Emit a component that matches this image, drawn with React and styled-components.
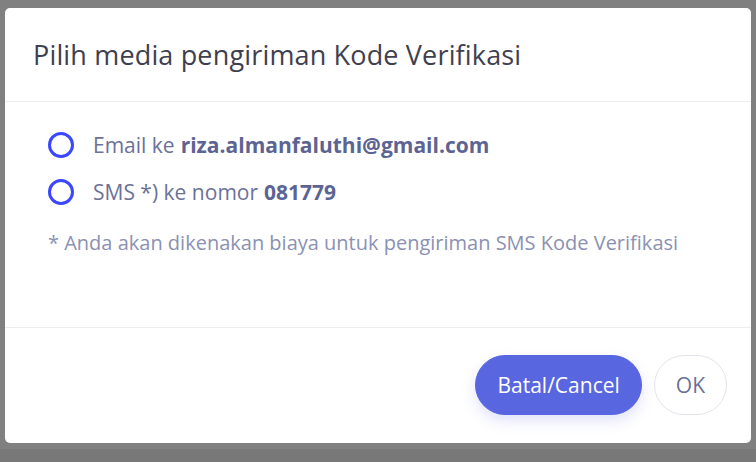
import React from 'react';
import styled, { createGlobalStyle } from 'styled-components';

const GlobalStyle = createGlobalStyle`
  html, body {
    margin: 0;
    padding: 0;
    background: #808080;
    font-family: 'Open Sans', 'Liberation Sans', sans-serif;
  }
`;

const Backdrop = styled.div`
  width: 756px;
  height: 462px;
  background: linear-gradient(to bottom, #808080 0, #808080 449px, #787878 449px);
  padding: 8px 5px 0;
  box-sizing: border-box;
  overflow: hidden;
`;

const Modal = styled.div`
  width: 746px;
  height: 435px;
  background: #fff;
  border-radius: 5px;
  display: flex;
  flex-direction: column;
  overflow: hidden;
`;

const Header = styled.div`
  height: 94px;
  box-sizing: border-box;
  padding: 0 28px;
  display: flex;
  align-items: center;
  border-bottom: 1px solid #ececf3;
`;

const Title = styled.h2`
  margin: 0;
  font-weight: 400;
  font-size: 27px;
  letter-spacing: 0.16px;
  color: #3f3f50;
`;

const Body = styled.div`
  flex: 1;
  padding: 19px 43px 0;
  display: flex;
  flex-direction: column;
`;

const Option = styled.label`
  display: flex;
  align-items: center;
  height: 47px;
  font-size: 21px;
  color: #6b7198;
  cursor: pointer;

  b {
    font-weight: 700;
    color: #5c6493;
    margin-left: 6px;
  }
`;

const Radio = styled.span`
  width: 20px;
  height: 20px;
  border: 3px solid #3a47ff;
  border-radius: 50%;
  margin: 0 19px 0 0;
  flex-shrink: 0;
`;

const Note = styled.p`
  margin: 14px 0 0 0;
  font-size: 20px;
  color: #8b91b2;
`;

const Footer = styled.div`
  height: 116px;
  box-sizing: border-box;
  border-top: 1px solid #ececf3;
  display: flex;
  align-items: center;
  justify-content: flex-end;
  gap: 12px;
  padding: 0 24px 2px 0;
`;

const Button = styled.button`
  height: 60px;
  border-radius: 30px;
  font-family: inherit;
  font-size: 21px;
  padding: 0 ${p => (p.primary ? '21px' : '21px')};
  cursor: pointer;
  border: 1px solid ${p => (p.primary ? '#5866df' : '#e3e3ec')};
  background: ${p => (p.primary ? '#5866df' : '#fff')};
  color: ${p => (p.primary ? '#fff' : '#6b7198')};
  box-shadow: ${p => (p.primary ? '0 6px 14px rgba(88, 102, 223, 0.18)' : 'none')};
`;

export default function App() {
  return (
    <>
      <GlobalStyle />
      <Backdrop>
        <Modal>
          <Header>
            <Title>Pilih media pengiriman Kode Verifikasi</Title>
          </Header>
          <Body>
            <Option>
              <Radio />
              Email ke <b>riza.almanfaluthi@gmail.com</b>
            </Option>
            <Option>
              <Radio />
              SMS *) ke nomor <b>081779</b>
            </Option>
            <Note>* Anda akan dikenakan biaya untuk pengiriman SMS Kode Verifikasi</Note>
          </Body>
          <Footer>
            <Button primary>Batal/Cancel</Button>
            <Button>OK</Button>
          </Footer>
        </Modal>
      </Backdrop>
    </>
  );
}
